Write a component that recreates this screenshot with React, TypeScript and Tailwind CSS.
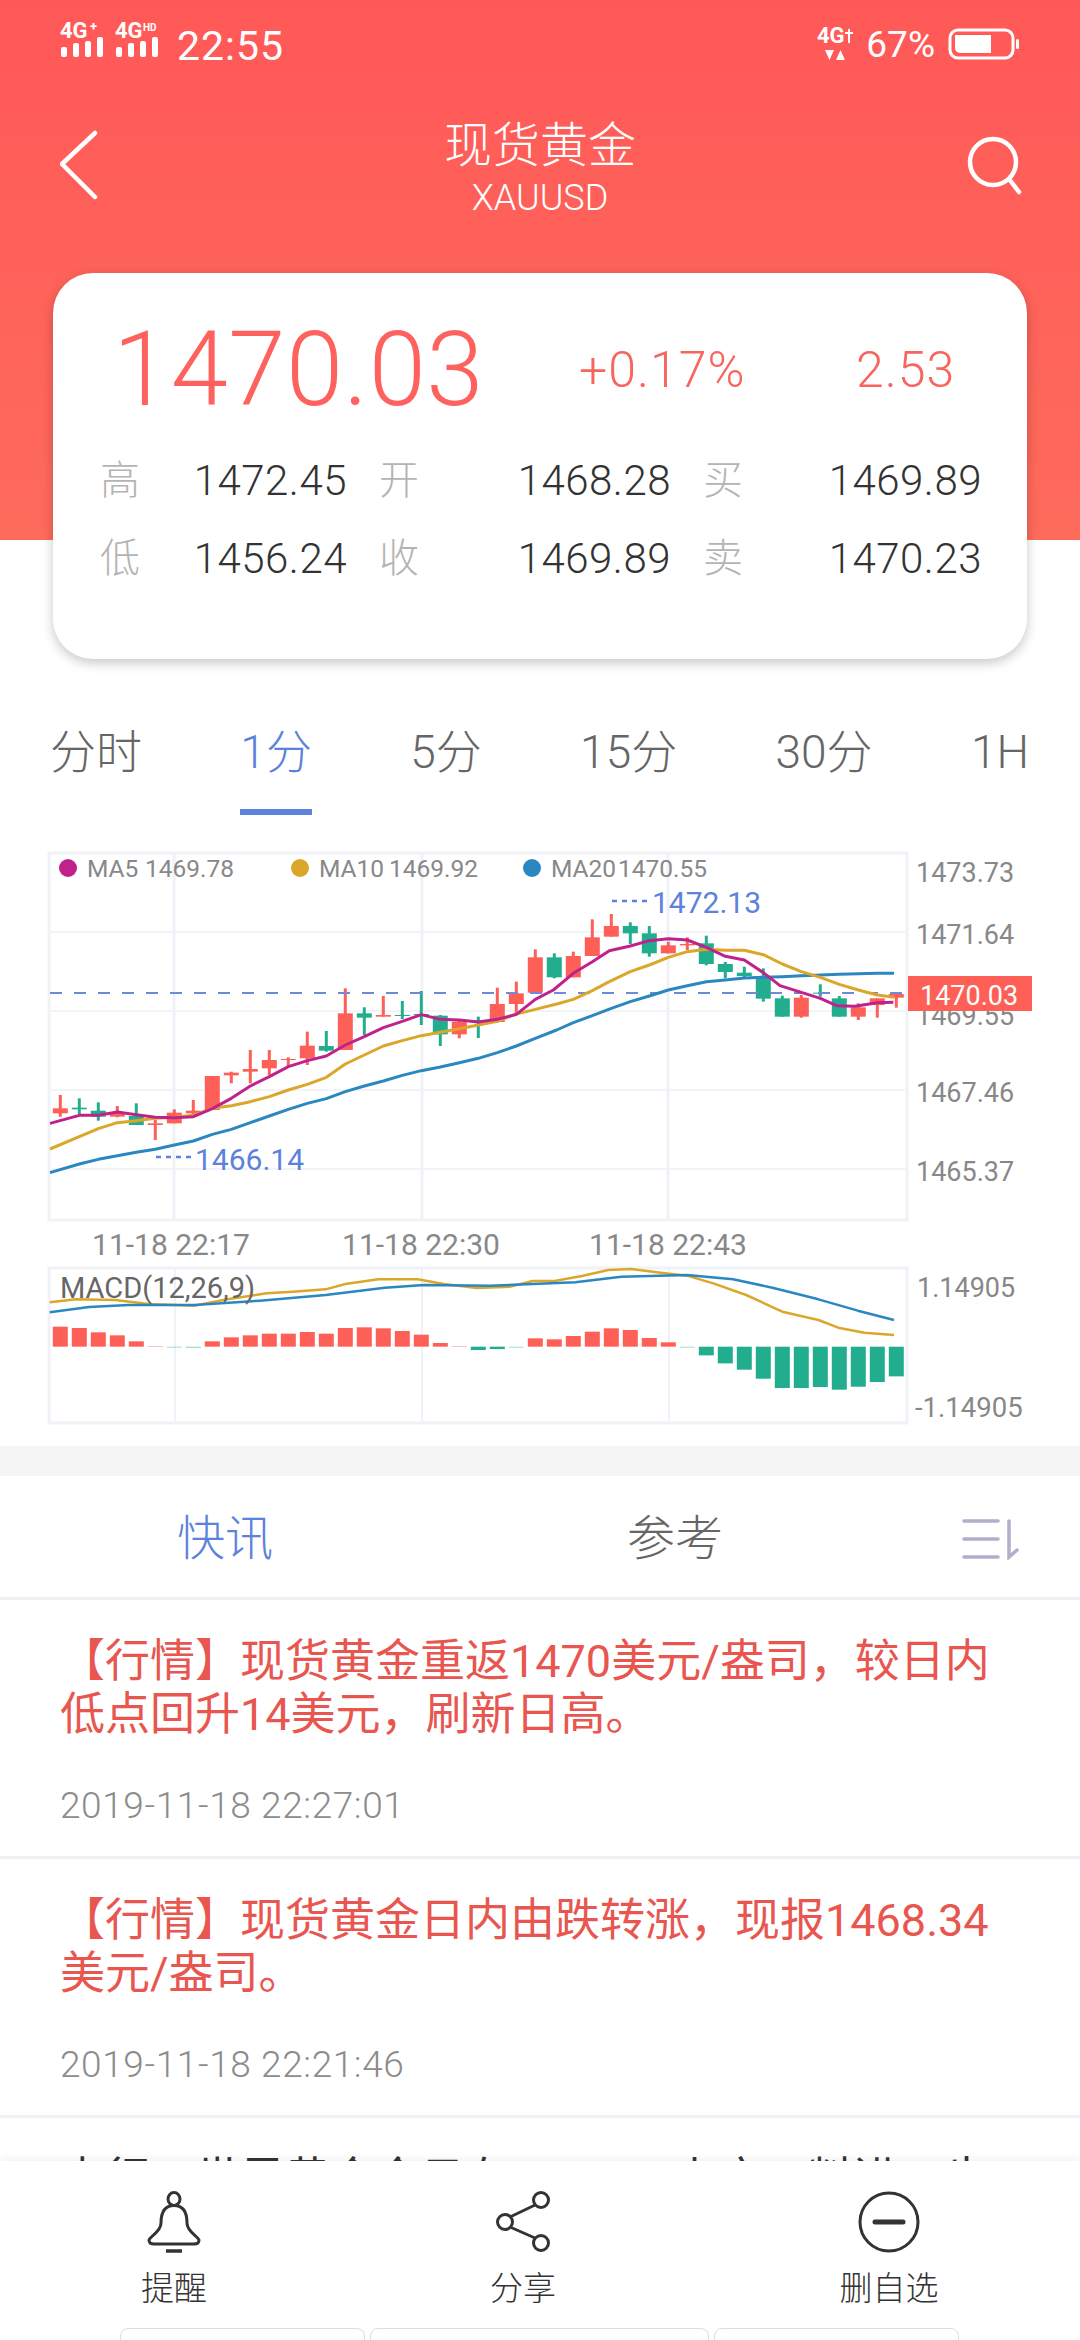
import React from 'react';

const RED = '#fe5f57';
const GREEN = '#22ad8f';
const BLUE = '#5c82dc';

// [color, wickTop, wickBottom, bodyTop, bodyBottom], y measured at 3x from y=840
const candles: [string, number, number, number, number][] = [
  ['r', 765, 830, 805, 820], ['g', 775, 822, 803, 808], ['g', 787, 842, 812, 830], ['r', 798, 832, 818, 830],
  ['g', 790, 855, 828, 855], ['r', 840, 900, 850, 855], ['r', 808, 850, 818, 850], ['r', 780, 830, 812, 820],
  ['r', 708, 810, 708, 810], ['r', 695, 730, 698, 706], ['r', 630, 730, 687, 695], ['r', 630, 705, 660, 685],
  ['r', 652, 680, 657, 659], ['r', 575, 675, 617, 655], ['g', 573, 635, 618, 632], ['r', 445, 630, 520, 630],
  ['g', 502, 585, 520, 533], ['r', 468, 530, 525, 530], ['g', 483, 537, 525, 527], ['g', 453, 555, 522, 524],
  ['g', 525, 618, 527, 583], ['r', 540, 595, 545, 583], ['g', 530, 594, 540, 548], ['r', 443, 548, 492, 546],
  ['r', 425, 520, 460, 492], ['r', 328, 460, 352, 458], ['g', 340, 415, 352, 412], ['r', 335, 412, 348, 412],
  ['r', 238, 348, 292, 348], ['r', 222, 290, 258, 290], ['g', 247, 312, 258, 280], ['g', 258, 350, 280, 340],
  ['r', 305, 340, 316, 340], ['r', 292, 330, 312, 316], ['g', 287, 376, 310, 372], ['g', 366, 415, 372, 396],
  ['g', 380, 412, 398, 408], ['g', 385, 485, 412, 476], ['g', 467, 530, 475, 530], ['r', 465, 533, 473, 530],
  ['g', 433, 470, 458, 461], ['g', 468, 530, 475, 530], ['r', 490, 540, 502, 530], ['r', 475, 533, 475, 495],
  ['r', 460, 503, 462, 473],
];

const candleX = (i: number) => 60.3 + 19 * i;

// line points, [x, y] at 3x; left part from x=30, right part from x=540
const toPts = (left: number[][], right: number[][]) =>
  [
    ...left.map(([x, y]) => `${30 + x / 3},${840 + y / 3}`),
    ...right.map(([x, y]) => `${540 + x / 3},${840 + y / 3}`),
  ].join(' ');

const ma5 = toPts(
  [[60, 850], [148, 826], [205, 826], [262, 816], [319, 824], [376, 832], [433, 833], [490, 830], [547, 806], [604, 775], [661, 738], [718, 710], [775, 680], [832, 662], [889, 648], [946, 615], [1003, 590], [1060, 563], [1117, 544], [1174, 524], [1231, 538], [1288, 540], [1345, 546], [1402, 538], [1459, 523], [1516, 478]],
  [[40, 450], [100, 400], [157, 365], [208, 332], [271, 318], [328, 302], [385, 296], [442, 300], [499, 322], [556, 349], [613, 360], [670, 398], [720, 437], [784, 457], [841, 475], [890, 497], [945, 499], [1012, 488], [1060, 487]],
);
const ma10 = toPts(
  [[60, 927], [148, 890], [205, 866], [262, 848], [319, 842], [376, 835], [433, 832], [490, 826], [547, 805], [604, 797], [661, 785], [718, 770], [775, 750], [832, 733], [889, 712], [946, 672], [1003, 645], [1060, 618], [1117, 602], [1174, 587], [1231, 577], [1288, 566], [1345, 555], [1402, 544], [1459, 522], [1516, 508]],
  [[50, 492], [100, 478], [157, 452], [208, 425], [271, 395], [328, 375], [385, 352], [442, 335], [499, 328], [556, 331], [613, 331], [670, 344], [727, 372], [784, 395], [841, 412], [898, 433], [955, 450], [1012, 465], [1062, 472]],
);
const ma20 = toPts(
  [[60, 998], [148, 972], [205, 958], [262, 947], [319, 937], [376, 928], [433, 915], [490, 903], [547, 883], [604, 868], [661, 848], [718, 828], [775, 808], [832, 790], [889, 776], [946, 755], [1003, 738], [1060, 723], [1117, 706], [1174, 692], [1231, 681], [1288, 668], [1345, 655], [1402, 638], [1459, 618], [1516, 595]],
  [[50, 570], [100, 548], [157, 527], [214, 505], [271, 485], [328, 468], [385, 450], [442, 437], [499, 425], [556, 420], [613, 414], [670, 412], [727, 410], [784, 407], [841, 405], [898, 403], [955, 401], [1012, 400], [1062, 400]],
);

// macd bar tops, y at 3x from y=1240, zero line at 320
const macdBars = [260, 264, 277, 286, 304, 318, 322, 324, 304, 292, 286, 281, 281, 276, 281, 264, 262, 265, 273, 284, 309, 318, 330, 327, 321, 295, 298, 288, 275, 265, 270, 294, 307, 321, 346, 370, 389, 416, 444, 444, 441, 449, 440, 426, 409];

const macdPts = (p: number[][]) => p.map(([x, y]) => `${30 + x / 1.522},${1240 + y / 3}`).join(' ');
const dea = macdPts([[30, 217], [90, 201], [150, 195], [250, 195], [350, 182], [450, 165], [540, 143], [600, 135], [700, 137], [830, 127], [900, 110], [1000, 105], [1070, 118], [1130, 143], [1200, 178], [1260, 212], [1315, 240]]);
const dif = macdPts([[30, 187], [70, 178], [130, 180], [180, 192], [250, 197], [300, 178], [360, 160], [400, 155], [450, 148], [480, 132], [530, 118], [590, 118], [630, 132], [680, 144], [730, 140], [765, 123], [800, 122], [840, 108], [880, 90], [915, 87], [960, 98], [1000, 107], [1040, 130], [1090, 165], [1145, 215], [1200, 240], [1230, 263], [1270, 278], [1315, 285]]);

const KChart = () => (
  <svg viewBox="0 840 1080 606" className="block w-[1080px] h-[606px] mt-[25px]">
    {/* k line frame */}
    <rect x="49" y="853" width="858" height="367" fill="none" stroke="#f0f2f7" strokeWidth="3" />
    {[932, 1011, 1090, 1169].map((y) => (
      <line key={y} x1="49" x2="907" y1={y} y2={y} stroke="#f2f4f8" strokeWidth="2" />
    ))}
    {[174, 422, 668].map((x) => (
      <line key={x} x1={x} x2={x} y1="853" y2="1220" stroke="#f0f2f7" strokeWidth="3" />
    ))}

    {candles.map(([c, wt, wb, bt, bb], i) => (
      <g key={i} fill={c === 'r' ? RED : GREEN}>
        <rect x={candleX(i) - 1.5} y={840 + wt / 3} width="3" height={(wb - wt) / 3} />
        <rect x={candleX(i) - 7.5} y={840 + bt / 3} width="15" height={Math.max((bb - bt) / 3, 1)} />
      </g>
    ))}

    <line x1="50" x2="905" y1="993" y2="993" stroke="#6e8ad8" strokeWidth="2" strokeDasharray="12 12" />
    <polyline points={ma20} fill="none" stroke="#2a87c0" strokeWidth="3" strokeLinejoin="round" />
    <polyline points={ma10} fill="none" stroke="#dba72b" strokeWidth="3" strokeLinejoin="round" />
    <polyline points={ma5} fill="none" stroke="#c0228c" strokeWidth="3" strokeLinejoin="round" />

    {/* legend */}
    <g fill="#888888" fontSize="24.5">
      <circle cx="68" cy="868" r="9" fill="#c0228c" />
      <text x="87" y="877">MA5</text>
      <text x="145" y="877">1469.78</text>
      <circle cx="300" cy="868" r="9" fill="#dba72b" />
      <text x="319" y="877">MA10</text>
      <text x="389" y="877">1469.92</text>
      <circle cx="532" cy="868" r="9" fill="#2a87c0" />
      <text x="551" y="877">MA20</text>
      <text x="618" y="877">1470.55</text>
    </g>

    {/* high and low marks */}
    <g fill={BLUE} fontSize="30">
      <line x1="612" x2="650" y1="901" y2="901" stroke={BLUE} strokeWidth="2.5" strokeDasharray="5 5" />
      <text x="652" y="913">1472.13</text>
      <line x1="156" x2="195" y1="1157" y2="1157" stroke={BLUE} strokeWidth="2.5" strokeDasharray="5 5" />
      <text x="195" y="1170">1466.14</text>
    </g>

    {/* y axis */}
    <g fill="#888888" fontSize="27">
      <text x="916" y="882">1473.73</text>
      <text x="916" y="944">1471.64</text>
      <text x="916" y="1025">1469.55</text>
      <text x="916" y="1102">1467.46</text>
      <text x="916" y="1181">1465.37</text>
    </g>
    <rect x="908" y="976" width="124" height="35" fill={RED} />
    <text x="920" y="1005" fill="#ffffff" fontSize="27">1470.03</text>

    {/* x axis */}
    <g fill="#888888" fontSize="30" textAnchor="middle">
      <text x="171" y="1255">11-18 22:17</text>
      <text x="421" y="1255">11-18 22:30</text>
      <text x="668" y="1255">11-18 22:43</text>
    </g>

    {/* macd */}
    <rect x="49" y="1268" width="858" height="155" fill="none" stroke="#f0f2f7" strokeWidth="3" />
    {[175, 422, 669].map((x) => (
      <line key={x} x1={x} x2={x} y1="1268" y2="1423" stroke="#f0f2f7" strokeWidth="2" />
    ))}
    {macdBars.map((t, i) => {
      const up = t < 320;
      const h = Math.abs(t - 320) / 3;
      const thin = h < 1.5;
      const y = up ? 1240 + t / 3 : 1346.7;
      return (
        <rect
          key={i}
          x={candleX(i) - 7.5}
          y={y}
          width="15"
          height={Math.max(h, 1)}
          fill={up ? RED : GREEN}
          opacity={thin ? 0.4 : 1}
        />
      );
    })}
    <polyline points={dif} fill="none" stroke="#dba72b" strokeWidth="2.5" strokeLinejoin="round" />
    <polyline points={dea} fill="none" stroke="#2a87c0" strokeWidth="2.5" strokeLinejoin="round" />
    <text x="60" y="1298" fill="#666666" fontSize="29">MACD(12,26,9)</text>
    <g fill="#888888" fontSize="27">
      <text x="917" y="1297">1.14905</text>
      <text x="915" y="1417" fontSize="27.5">-1.14905</text>
    </g>
  </svg>
);

const Signal = ({ sup, supX, supSize }: { sup: string; supX: number; supSize: number }) => (
  <svg width="48" height="36" viewBox="0 0 48 36" fill="#ffffff" className="overflow-visible">
    <text x="0" y="16" fontSize="22" fontWeight="700">4G</text>
    <text x={supX} y="9" fontSize={supSize} fontWeight="700">{sup}</text>
    <rect x="1" y="25" width="6" height="10" rx="2" />
    <rect x="13" y="21" width="6" height="14" rx="2" />
    <rect x="25" y="19" width="6" height="16" rx="2" />
    <rect x="37" y="15" width="6" height="20" rx="2" />
  </svg>
);

const StatusBar = () => (
  <div className="flex h-[88px] items-center justify-between pl-[60px] pr-[60px] text-white">
    <div className="flex items-center">
      <div className="mb-[8px]">
        <Signal sup="+" supX={30} supSize={13} />
      </div>
      <div className="ml-[7px] mb-[8px]">
        <Signal sup="HD" supX={28} supSize={10} />
      </div>
      <span className="ml-[14px] mt-[4px] text-[41px] leading-none tracking-[1px]">22:55</span>
    </div>
    <div className="flex items-center">
      <svg width="36" height="36" viewBox="0 0 36 36" fill="#ffffff" className="overflow-visible">
        <text x="0" y="17" fontSize="22" fontWeight="700">4G</text>
        <rect x="31" y="3" width="2" height="14" />
        <rect x="28" y="6" width="8" height="2" />
        <path d="M8 24h9l-4.5 10zM28 34h-9l4.5-10z" />
      </svg>
      <span className="ml-[13px] text-[37px] leading-none">67%</span>
      <svg width="72" height="32" viewBox="0 0 72 32" className="ml-[13px]">
        <rect x="2" y="2" width="63" height="28" rx="8" fill="none" stroke="#ffffff" strokeWidth="3" />
        <path d="M7 7h36v18H12a5 5 0 0 1-5-5z" fill="#ffffff" />
        <rect x="68" y="11" width="3" height="10" rx="1.5" fill="#ffffff" />
      </svg>
    </div>
  </div>
);

const NavBar = () => (
  <div className="flex items-start justify-between px-[60px] pt-[28px]">
    <div className="w-[60px]">
      <svg width="40" height="70" viewBox="0 0 40 70" className="mt-[14px]">
        <polyline points="35,3 2,34 35,67" fill="none" stroke="#ffffff" strokeWidth="4.5" strokeLinecap="round" strokeLinejoin="round" />
      </svg>
    </div>
    <div className="flex flex-col items-center text-white">
      <div className="text-[48px] leading-[60px] font-light">现货黄金</div>
      <div className="text-[36px] leading-[42px] font-light mt-[1px]">XAUUSD</div>
    </div>
    <div className="w-[60px] pl-[7px]">
      <svg width="56" height="60" viewBox="0 0 56 60" className="mt-[20px]">
        <circle cx="26" cy="26" r="23" fill="none" stroke="#ffffff" strokeWidth="4.5" />
        <line x1="42" y1="43" x2="52" y2="56" stroke="#ffffff" strokeWidth="4.5" strokeLinecap="round" />
      </svg>
    </div>
  </div>
);

const QuoteRow = ({ items }: { items: [string, string][] }) => (
  <div className="grid grid-cols-[247px_292px_279px] gap-x-[32px] pl-[47px]">
    {items.map(([label, value]) => (
      <div key={label} className="flex items-center justify-between">
        <span className="text-[40px] leading-[78px] text-[#b4b4b4] font-light">{label}</span>
        <span className="text-[42px] leading-[78px] tracking-[0.5px] text-[#333333] font-light">{value}</span>
      </div>
    ))}
  </div>
);

const QuoteCard = () => (
  <div className="relative mx-[53px] -mt-[267px] h-[386px] rounded-[40px] bg-white pt-[37px] shadow-[0_4px_12px_rgba(0,0,0,0.22)]">
    <div className="flex items-center pl-[60px]">
      <span className="w-[466px] text-[103px] leading-[120px] tracking-[0.5px] text-[#fd625e] font-light">1470.03</span>
      <span className="w-[277px] text-[50px] leading-[120px] tracking-[1px] text-[#f8655f] font-light">+0.17%</span>
      <span className="text-[50px] leading-[120px] tracking-[1px] text-[#f8655f] font-light">2.53</span>
    </div>
    <div className="mt-[12px]">
      <QuoteRow items={[['高', '1472.45'], ['开', '1468.28'], ['买', '1469.89']]} />
      <QuoteRow items={[['低', '1456.24'], ['收', '1469.89'], ['卖', '1470.23']]} />
    </div>
  </div>
);

const periods = ['分时', '1分', '5分', '15分', '30分', '1H'];

const PeriodTabs = () => (
  <div className="mt-[61px] flex justify-between pl-[50px] pr-[51px]">
    {periods.map((p) => (
      <div
        key={p}
        className={`h-[95px] border-b-[6px] text-[46px] leading-[64px] font-light ${p === '1分' ? 'border-[#5c82dc] text-[#5c82dc]' : 'border-transparent text-[#666666]'}`}
      >
        {p}
      </div>
    ))}
  </div>
);

const NewsTabs = () => (
  <div className="flex h-[124px] items-center border-b-[3px] border-[#eef1f6] pt-[4px]">
    <div className="w-[450px] text-center text-[48px] text-[#5c82dc] font-light">快讯</div>
    <div className="w-[450px] text-center text-[48px] text-[#666666] font-light">参考</div>
    <svg width="58" height="42" viewBox="0 0 58 42" className="ml-[62px]" stroke="#aeb0cc" strokeWidth="3.5" strokeLinecap="round" fill="none">
      <path d="M2 3h34M2 21h34M2 39h34" />
      <path d="M47 3v36l8-7" />
    </svg>
  </div>
);

const NewsItem = ({ text, time, color = 'text-[#e8564f]' }: { text: string; time?: string; color?: string }) => (
  <div className="h-[259px] border-b-[3px] border-[#eef1f6] pl-[60px] pr-[70px] pt-[35px]">
    <div className={`text-[45px] leading-[53px] ${color}`}>{text}</div>
    {time && <div className="mt-[40px] text-[37px] leading-[50px] tracking-[0.6px] text-[#8c8c8c] font-light">{time}</div>}
  </div>
);

const Action = ({ label, width, children }: { label: string; width: string; children: React.ReactNode }) => (
  <div className={`flex flex-col items-center ${width}`}>
    <div className="flex h-[62px] items-center justify-center">{children}</div>
    <div className="mt-[16px] text-[33px] leading-[40px] text-[#333333] font-light">{label}</div>
  </div>
);

const BottomBar = () => (
  <div className="absolute inset-x-0 bottom-0 h-[179px] overflow-hidden bg-white shadow-[0_-3px_6px_rgba(0,0,0,0.05)]">
    <div className="flex pt-[30px]">
      <Action label="提醒" width="w-[348px]">
        <svg width="56" height="62" viewBox="0 0 56 62" fill="none" stroke="#333333" strokeWidth="3">
          <ellipse cx="28" cy="8" rx="6" ry="6.5" />
          <path d="M28 14.5C18 14.5 15 22 15 32C15 41 4 45 3 49C3 52 5 53 8 53H48C51 53 53 52 53 49C52 45 41 41 41 32C41 22 38 14.5 28 14.5Z" />
          <path d="M20 60h16" strokeWidth="3.5" />
        </svg>
      </Action>
      <Action label="分享" width="w-[350px]">
        <svg width="56" height="62" viewBox="0 0 56 62" fill="none" stroke="#333333" strokeWidth="3">
          <circle cx="46" cy="9" r="7.5" />
          <circle cx="10" cy="31" r="7.5" />
          <circle cx="46" cy="52" r="7.5" />
          <path d="M40 14L15 26M15 36L40 47" />
        </svg>
      </Action>
      <Action label="删自选" width="w-[382px]">
        <svg width="62" height="62" viewBox="0 0 62 62" fill="none" stroke="#333333" strokeWidth="3">
          <circle cx="31" cy="31" r="29" />
          <path d="M17 31h28" strokeWidth="5" strokeLinecap="round" />
        </svg>
      </Action>
    </div>
    <div className="mt-[19px] flex gap-[5px] pl-[120px]">
      <div className="h-[20px] w-[245px] rounded-t-[8px] border border-[#dddddd]" />
      <div className="h-[20px] w-[339px] rounded-t-[8px] border border-[#dddddd]" />
      <div className="h-[20px] w-[245px] rounded-t-[8px] border border-[#dddddd]" />
    </div>
  </div>
);

export default function App() {
  return (
    <div className="relative h-[2340px] w-[1080px] overflow-hidden bg-white font-['Roboto','Noto_Sans_CJK_SC',sans-serif]">
      <div className="h-[540px] bg-gradient-to-b from-[#ff5858] to-[#fe6b5b]">
        <StatusBar />
        <NavBar />
      </div>
      <QuoteCard />
      <PeriodTabs />
      <KChart />
      <div className="h-[30px] bg-[#f5f5f5]" />
      <NewsTabs />
      <NewsItem text="【行情】现货黄金重返1470美元/盎司，较日内低点回升14美元，刷新日高。" time="2019-11-18 22:27:01" />
      <NewsItem text="【行情】现货黄金日内由跌转涨，现报1468.34美元/盎司。" time="2019-11-18 22:21:46" />
      <NewsItem text="央行：世界黄金今日在1470.28上方，料进一步走高" color="text-[#333333]" />
      <BottomBar />
    </div>
  );
}
